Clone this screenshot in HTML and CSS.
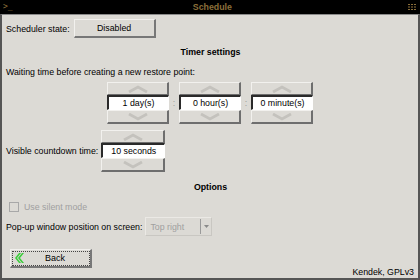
FILE: index.html
```html
<!DOCTYPE html>
<html>
<head>
<meta charset="utf-8">
<link rel="stylesheet" href="styles.css">
</head>
<body>
<div class="window">
  <div class="titlebar">
    <span class="prompt">&gt;_</span>
    <span class="title">Schedule</span>
    <svg class="menu" width="8" height="6" viewBox="0 0 8 6">
      <rect x="0" y="0" width="2" height="1"/><rect x="3" y="0" width="2" height="1"/><rect x="6" y="0" width="2" height="1"/>
      <rect x="0" y="2.5" width="2" height="1"/><rect x="3" y="2.5" width="2" height="1"/><rect x="6" y="2.5" width="2" height="1"/>
      <rect x="0" y="5" width="2" height="1"/><rect x="3" y="5" width="2" height="1"/><rect x="6" y="5" width="2" height="1"/>
    </svg>
  </div>
  <div class="content">
    <div class="row state-row">
      <span class="label">Scheduler state:</span>
      <button class="btn state-btn">Disabled</button>
    </div>
    <div class="heading timer-heading">Timer settings</div>
    <div class="row wait-row"><span class="label">Waiting time before creating a new restore point:</span></div>
    <div class="spin-group">
      <div class="spin">
        <div class="spin-up"><svg width="22" height="8" viewBox="0 0 22 8"><polyline points="2,7 11,2 20,7"/></svg></div>
        <div class="spin-field">1 day(s)</div>
        <div class="spin-down"><svg width="22" height="8" viewBox="0 0 22 8"><polyline points="2,1 11,6 20,1"/></svg></div>
      </div>
      <span class="colon">:</span>
      <div class="spin">
        <div class="spin-up"><svg width="22" height="8" viewBox="0 0 22 8"><polyline points="2,7 11,2 20,7"/></svg></div>
        <div class="spin-field">0 hour(s)</div>
        <div class="spin-down"><svg width="22" height="8" viewBox="0 0 22 8"><polyline points="2,1 11,6 20,1"/></svg></div>
      </div>
      <span class="colon">:</span>
      <div class="spin">
        <div class="spin-up"><svg width="22" height="8" viewBox="0 0 22 8"><polyline points="2,7 11,2 20,7"/></svg></div>
        <div class="spin-field">0 minute(s)</div>
        <div class="spin-down"><svg width="22" height="8" viewBox="0 0 22 8"><polyline points="2,1 11,6 20,1"/></svg></div>
      </div>
    </div>
    <div class="row countdown-row">
      <span class="label">Visible countdown time:</span>
      <div class="spin spin-small">
        <div class="spin-up"><svg width="22" height="8" viewBox="0 0 22 8"><polyline points="2,7 11,2 20,7"/></svg></div>
        <div class="spin-field">10 seconds</div>
        <div class="spin-down"><svg width="22" height="8" viewBox="0 0 22 8"><polyline points="2,1 11,6 20,1"/></svg></div>
      </div>
    </div>
    <div class="heading options-heading">Options</div>
    <div class="row check-row">
      <span class="checkbox"></span>
      <span class="disabled-text">Use silent mode</span>
    </div>
    <div class="row popup-row">
      <span class="label">Pop-up window position on screen:</span>
      <div class="combo">
        <span class="combo-text">Top right</span>
        <span class="combo-arrow"><svg width="5" height="3" viewBox="0 0 5 3"><polygon points="0,0 5,0 2.5,3"/></svg></span>
      </div>
    </div>
    <div class="row bottom-row">
      <button class="btn back-btn">
        <svg class="back-icon" width="9" height="10" viewBox="0 0 9 10">
          <polygon points="4,0 6,0 2,5 6,10 4,10 0,5"/>
          <polygon points="7,0 9,0 5,5 9,10 7,10 3,5"/>
        </svg>
        <span class="back-label">Back</span>
      </button>
      <span class="credit">Kendek, GPLv3</span>
    </div>
  </div>
</div>
</body>
</html>
```

FILE: styles.css
```css
* { box-sizing: border-box; }
html, body { margin: 0; padding: 0; }
body {
  width: 420px;
  height: 280px;
  overflow: hidden;
  background: #000;
  font-family: "Liberation Sans", Arial, sans-serif;
  font-size: 8.8px;
  color: #000;
}
.window {
  width: 420px;
  height: 280px;
  display: flex;
  flex-direction: column;
}
.titlebar {
  height: 14px;
  background: #000;
  display: flex;
  align-items: center;
  padding: 0 4px 0 3px;
  color: #8b6f3a;
}
.prompt {
  font-size: 8px;
  line-height: 8px;
  font-family: "DejaVu Sans Mono", monospace;
}
.title {
  flex: 1;
  text-align: center;
  font-weight: bold;
  font-size: 8.8px;
  padding-left: 4px;
}
.menu { fill: #8b6f3a; }
.content {
  flex: 1;
  background: #dcdad5;
  border: 2px solid #555;
  border-top: 1px solid #8a8a8a;
  display: flex;
  flex-direction: column;
  padding: 0 3px 0 4px;
}
.row {
  display: flex;
  align-items: center;
}
.btn {
  font-family: inherit;
  font-size: inherit;
  color: #000;
  background: #dcdad5;
  border-style: solid;
  border-width: 1px 2px 2px 1px;
  border-color: #f2f1ee #777 #777 #f2f1ee;
  padding: 0;
  margin: 0;
}
.state-row { margin-top: 4px; height: 19px; }
.state-btn {
  margin-left: 4px;
  width: 82px;
  height: 19px;
}
.heading {
  font-weight: bold;
  text-align: center;
  display: flex;
  align-items: center;
  justify-content: center;
}
.timer-heading { height: 28px; }
.wait-row { height: 12px; }
.spin-group {
  margin-top: 4px;
  display: flex;
  justify-content: center;
  align-items: center;
  padding-right: 1px;
}
.spin {
  width: 62px;
  height: 42px;
  display: flex;
  flex-direction: column;
}
.spin-up, .spin-down {
  background: #dcdad5;
  border-style: solid;
  border-width: 1px 2px 1px 1px;
  border-color: #f2f1ee #6e6e6e #6e6e6e #f2f1ee;
  display: flex;
  align-items: center;
  justify-content: center;
}
.spin-up { height: 13px; }
.spin-down { height: 14px; border-bottom-width: 2px; }
.spin svg polyline {
  fill: none;
  stroke: #c4c2bd;
  stroke-width: 2.8;
}
.spin-field {
  height: 15px;
  background: #fff;
  border-style: solid;
  border-width: 2px 1px 1px 2px;
  border-color: #2a2a2a #fff #fff #2a2a2a;
  display: flex;
  align-items: center;
  justify-content: center;
}
.colon {
  width: 10px;
  text-align: center;
  color: #9a9a9a;
}
.countdown-row { margin-top: 6px; height: 42px; }
.spin-small { margin-left: 3px; width: 64px; }
.options-heading { height: 29px; }
.check-row { height: 12px; }
.checkbox {
  width: 10px;
  height: 10px;
  border: 1px solid #a8a8a8;
  margin-left: 3px;
  margin-right: 5px;
}
.disabled-text { color: #a0a0a0; }
.popup-row { margin-top: 4px; height: 19px; }
.combo {
  margin-left: 3px;
  width: 67px;
  height: 19px;
  border: 1px solid #ebe9e5;
  border-right-color: #c9c7c2;
  border-bottom-color: #c9c7c2;
  display: flex;
  align-items: center;
}
.combo-text {
  flex: 1;
  color: #a0a0a0;
  padding-left: 4px;
}
.combo-arrow {
  width: 11px;
  height: 15px;
  border-left: 1px solid #9a9a9a;
  display: flex;
  align-items: center;
  justify-content: center;
}
.combo-arrow svg { fill: #8a8a8a; }
.bottom-row {
  margin-top: 13px;
  flex: 1;
  align-items: flex-start;
}
.back-btn {
  margin-left: 4px;
  width: 82px;
  height: 19px;
  display: flex;
  align-items: center;
  outline: 1px dotted #444;
  outline-offset: -3px;
  padding-left: 4px;
}
.back-icon { fill: #3dcc3d; }
.back-label {
  flex: 1;
  text-align: center;
  padding-right: 4px;
  font-size: 9px;
}
.credit {
  margin-left: auto;
  align-self: flex-end;
  line-height: 12px;
  margin-right: 1px;
}
```
